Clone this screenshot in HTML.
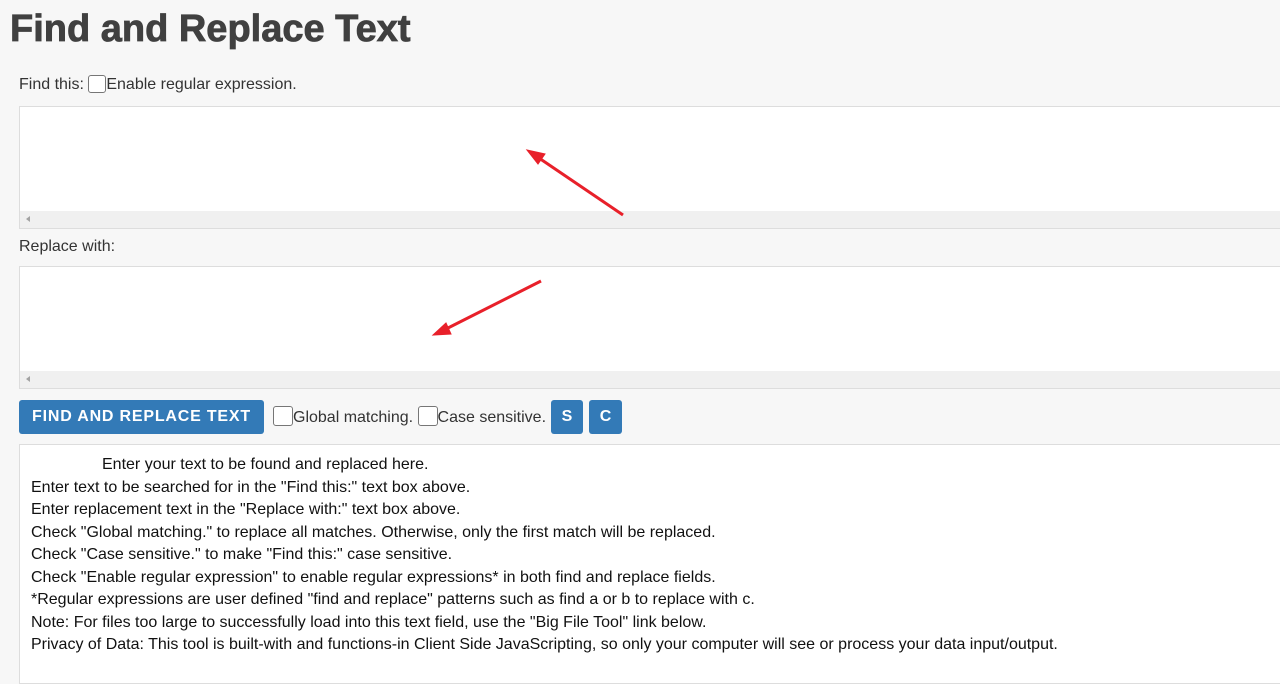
<!DOCTYPE html>
<html><head><style>
body{margin:0;background:#f7f7f7;font-family:"Liberation Sans",Arial,sans-serif;width:1280px;height:671px;overflow:hidden;position:relative}
h1{position:absolute;left:10px;top:8px;margin:0;font-size:38px;font-weight:bold;color:#404040;letter-spacing:0;-webkit-text-stroke:0.8px #404040}
.lbl{position:absolute;left:19px;font-size:16px;color:#333}
.cb{display:inline-block;width:18px;height:18px;border:1px solid #767676;border-radius:3px;background:#fff;vertical-align:-4px;box-sizing:border-box}
.ta{position:absolute;left:19px;width:1270px;height:123px;background:#fff;border:1px solid #ddd;box-sizing:border-box}
.ta .sb{position:absolute;left:0;right:0;bottom:0;height:17px;background:#f0f0f0}
.ta .sb:before{content:"";position:absolute;left:6px;top:5px;border-right:4px solid #a3a3a3;border-top:3px solid transparent;border-bottom:3px solid transparent}
.btn{position:absolute;top:400px;height:34px;background:#337ab7;color:#fff;border-radius:3px;font-weight:bold;font-size:16px;line-height:34px;text-align:center;letter-spacing:0.8px}
.out{position:absolute;left:19px;top:444px;width:1270px;height:240px;background:#fff;border:1px solid #ddd;box-sizing:border-box;padding:9px 11px;font-size:16px;line-height:22.5px;color:#111}
</style></head><body>
<h1>Find and Replace Text</h1>
<div class="lbl" style="top:75px">Find this: <span class="cb"></span>Enable regular expression.</div>
<div class="ta" style="top:106px"><div class="sb"></div></div>
<div class="lbl" style="top:238px">Replace with:</div>
<div class="ta" style="top:266px"><div class="sb"></div></div>
<div class="btn" style="left:19px;width:245px">FIND AND REPLACE TEXT</div>
<div class="lbl" style="top:406px;left:273px"><span class="cb" style="width:20px;height:20px"></span>Global matching. <span class="cb" style="width:20px;height:20px"></span>Case sensitive.</div>
<div class="btn" style="left:551px;width:32px;letter-spacing:0">S</div>
<div class="btn" style="left:589px;width:33px;letter-spacing:0">C</div>
<div class="out"><div style="padding-left:71px">Enter your text to be found and replaced here.</div>
Enter text to be searched for in the "Find this:" text box above.<br>
Enter replacement text in the "Replace with:" text box above.<br>
Check "Global matching." to replace all matches. Otherwise, only the first match will be replaced.<br>
Check "Case sensitive." to make "Find this:" case sensitive.<br>
Check "Enable regular expression" to enable regular expressions* in both find and replace fields.<br>
*Regular expressions are user defined "find and replace" patterns such as find a or b to replace with c.<br>
Note: For files too large to successfully load into this text field, use the "Big File Tool" link below.<br>
Privacy of Data: This tool is built-with and functions-in Client Side JavaScripting, so only your computer will see or process your data input/output.</div>
<svg style="position:absolute;left:0;top:0" width="1280" height="671">
<g stroke="#e8202a" stroke-width="3" fill="#e8202a">
<line x1="623" y1="215" x2="536" y2="156"/>
<polygon points="527,150 545,154 538,164" stroke-width="1"/>
<line x1="541" y1="281" x2="444" y2="330"/>
<polygon points="433,335 446,323 451,334" stroke-width="1"/>
</g></svg>
</body></html>
